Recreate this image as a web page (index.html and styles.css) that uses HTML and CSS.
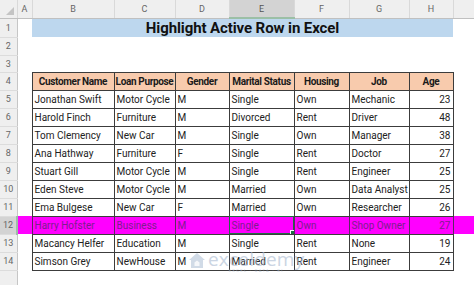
FILE: index.html
```html
<!DOCTYPE html>
<html lang="en">
<head>
  <meta charset="UTF-8">
  <title>Highlight Active Row in Excel</title>
  <link rel="stylesheet" href="styles.css">
</head>
<body>
  <div class="sheet-wrap">
    <table class="sheet">
      <colgroup>
        <col class="w-rh"><col class="w-a"><col class="w-b"><col class="w-c"><col class="w-d">
        <col class="w-e"><col class="w-f"><col class="w-g"><col class="w-h"><col class="w-i">
      </colgroup>
      <tr class="col-heads">
        <th class="corner"><span class="tri"></span></th>
        <th>A</th><th>B</th><th>C</th><th>D</th><th class="sel">E</th><th>F</th><th>G</th><th>H</th><th></th>
      </tr>
      <tr class="r-title">
        <th class="rn">1</th><td></td>
        <td colspan="7" class="title">Highlight Active Row in Excel</td><td></td>
      </tr>
      <tr class="r-gap2"><th class="rn">2</th><td></td><td></td><td></td><td></td><td></td><td></td><td></td><td></td><td></td></tr>
      <tr class="r-gap3"><th class="rn">3</th><td></td><td></td><td></td><td></td><td></td><td></td><td></td><td></td><td></td></tr>
      <tr class="r-data">
        <th class="rn">4</th><td></td>
        <td class="cell head">Customer Name</td><td class="cell head">Loan Purpose</td><td class="cell head">Gender</td>
        <td class="cell head">Marital Status</td><td class="cell head">Housing</td><td class="cell head">Job</td><td class="cell head">Age</td><td></td>
      </tr>
      <tr class="r-data">
        <th class="rn">5</th><td></td>
        <td class="cell">Jonathan Swift</td><td class="cell">Motor Cycle</td><td class="cell">M</td><td class="cell">Single</td><td class="cell">Own</td><td class="cell">Mechanic</td><td class="cell num">23</td><td></td>
      </tr>
      <tr class="r-data">
        <th class="rn">6</th><td></td>
        <td class="cell">Harold Finch</td><td class="cell">Furniture</td><td class="cell">M</td><td class="cell">Divorced</td><td class="cell">Rent</td><td class="cell">Driver</td><td class="cell num">48</td><td></td>
      </tr>
      <tr class="r-data">
        <th class="rn">7</th><td></td>
        <td class="cell">Tom Clemency</td><td class="cell">New Car</td><td class="cell">M</td><td class="cell">Single</td><td class="cell">Own</td><td class="cell">Manager</td><td class="cell num">38</td><td></td>
      </tr>
      <tr class="r-data">
        <th class="rn">8</th><td></td>
        <td class="cell">Ana Hathway</td><td class="cell">Furniture</td><td class="cell">F</td><td class="cell">Single</td><td class="cell">Rent</td><td class="cell">Doctor</td><td class="cell num">27</td><td></td>
      </tr>
      <tr class="r-data">
        <th class="rn">9</th><td></td>
        <td class="cell">Stuart Gill</td><td class="cell">Motor Cycle</td><td class="cell">M</td><td class="cell">Single</td><td class="cell">Rent</td><td class="cell">Engineer</td><td class="cell num">25</td><td></td>
      </tr>
      <tr class="r-data">
        <th class="rn">10</th><td></td>
        <td class="cell">Eden Steve</td><td class="cell">Motor Cycle</td><td class="cell">M</td><td class="cell">Married</td><td class="cell">Own</td><td class="cell">Data Analyst</td><td class="cell num">25</td><td></td>
      </tr>
      <tr class="r-data">
        <th class="rn">11</th><td></td>
        <td class="cell">Ema Bulgese</td><td class="cell">New Car</td><td class="cell">F</td><td class="cell">Married</td><td class="cell">Own</td><td class="cell">Researcher</td><td class="cell num">26</td><td></td>
      </tr>
      <tr class="r-data active-row">
        <th class="rn sel-row">12</th><td></td>
        <td class="cell">Harry Hofster</td><td class="cell">Business</td><td class="cell">M</td><td class="cell active">Single</td><td class="cell">Own</td><td class="cell">Shop Owner</td><td class="cell num">27</td><td></td>
      </tr>
      <tr class="r-data">
        <th class="rn">13</th><td></td>
        <td class="cell">Macancy Helfer</td><td class="cell">Education</td><td class="cell">M</td><td class="cell">Single</td><td class="cell">Rent</td><td class="cell">None</td><td class="cell num">19</td><td></td>
      </tr>
      <tr class="r-data">
        <th class="rn">14</th><td></td>
        <td class="cell">Simson Grey</td><td class="cell">NewHouse</td><td class="cell">M</td><td class="cell">Married</td><td class="cell">Rent</td><td class="cell">Engineer</td><td class="cell num">24</td><td></td>
      </tr>
      <tr class="r-rest"><th class="rn"></th><td></td><td></td><td></td><td></td><td></td><td></td><td></td><td></td><td></td></tr>
    </table>

    <div class="watermark">
      <svg class="wm-icon" width="18" height="17" viewBox="0 0 18 17">
        <path d="M9 1 L17 8 L15 8 L15 16 L3 16 L3 8 L1 8 Z" fill="#b4c4d8"/>
        <path d="M6.5 10.5 L9 8.5 L11.5 10.5 L11.5 14 L6.5 14 Z" fill="#ffffff" opacity="0.8"/>
      </svg>
      <div class="wm-text">
        <div class="wm-name">exceldemy</div>
        <div class="wm-sub">EXCEL · DATA · BI</div>
      </div>
    </div>
  </div>
</body>
</html>
```

FILE: styles.css
```css
* {
  box-sizing: border-box;
  margin: 0;
  padding: 0;
}

body {
  width: 474px;
  height: 285px;
  overflow: hidden;
  background: #fff;
  font-family: Roboto, "Liberation Sans", Arial, sans-serif;
  color: #222;
}

.sheet-wrap {
  position: relative;
  width: 474px;
  height: 285px;
}

.sheet {
  width: 474px;
  table-layout: fixed;
  border-collapse: collapse;
  font-size: 10px;
}

.w-rh { width: 17px; }
.w-a { width: 15px; }
.w-b { width: 82px; }
.w-c { width: 61px; }
.w-d { width: 54px; }
.w-e { width: 65px; }
.w-f { width: 55px; }
.w-g { width: 60px; }
.w-h { width: 44px; }
.w-i { width: 21px; }

td {
  padding: 0 2px;
  white-space: nowrap;
  overflow: hidden;
}

/* column letters */
.col-heads {
  height: 18px;
}

.col-heads th {
  background: #efefef;
  color: #666;
  font-weight: normal;
  font-size: 9px;
  border-right: 1px solid #d9d9d9;
  border-bottom: 1px solid #c0c0c0;
}

.col-heads th.sel {
  background: #d3d3d3;
  color: #555;
  border-bottom: 2px solid #9bbfa6;
}

.corner {
  position: relative;
}

.tri {
  position: absolute;
  right: 3px;
  bottom: 3px;
  width: 0;
  height: 0;
  border-left: 8px solid transparent;
  border-bottom: 8px solid #c4c4c4;
}

/* row numbers */
.rn {
  background: #efefef;
  color: #666;
  font-weight: normal;
  font-size: 9px;
  border-right: 1px solid #c6c6c6;
  border-bottom: 1px solid #dcdcdc;
}

.rn.sel-row {
  background: #d3d3d3;
  border-right: 2px solid #9bbfa6;
}

.r-title { height: 19px; }
.r-gap2 { height: 18px; }
.r-gap3 { height: 17px; }
.r-data { height: 18px; }
.r-rest { height: 20px; }

.title {
  background: #bdd7ee;
  text-align: center;
  font-weight: bold;
  font-size: 15px;
  letter-spacing: -0.1px;
  color: #111;
  border-top: 1px solid #fff;
}

.cell {
  border: 1px solid #3c3c3c;
}

.cell.head {
  background: #f8cbad;
  font-weight: bold;
  text-align: center;
  letter-spacing: -0.35px;
  padding: 0 1px;
  color: #1a1a1a;
}

.cell.num {
  text-align: right;
}

.active-row td {
  background: #ff00ff;
  color: #7d1e8e;
}

.active-row .cell {
  border-left-color: #5a2a60;
  border-right-color: #5a2a60;
}

td.active {
  position: relative;
  outline: 1px solid #1f6e43;
  outline-offset: -1px;
}

td.active::after {
  content: "";
  position: absolute;
  right: -3px;
  bottom: -3px;
  width: 5px;
  height: 5px;
  background: #1f6e43;
  border: 1px solid #fff;
}

/* logo laid over the table */
.watermark {
  position: absolute;
  left: 188px;
  top: 251px;
  display: flex;
  align-items: flex-start;
  gap: 2px;
  opacity: 0.6;
  pointer-events: none;
}

.wm-icon {
  margin-top: 1px;
}

.wm-name {
  font-family: "Open Sans", sans-serif;
  font-size: 19px;
  line-height: 16px;
  color: #a9bad1;
  letter-spacing: 0.2px;
}

.wm-sub {
  font-size: 4px;
  letter-spacing: 1.4px;
  color: #a9bad1;
  text-align: center;
  margin-top: 1px;
}
```
